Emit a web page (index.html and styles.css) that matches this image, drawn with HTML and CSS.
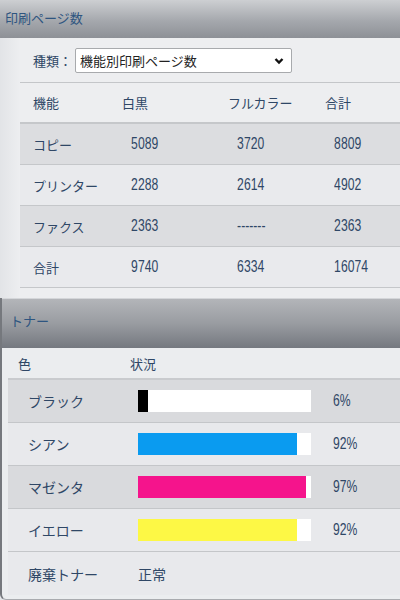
FILE: index.html
```html
<!DOCTYPE html>
<html lang="ja">
<head>
<meta charset="utf-8">
<link rel="stylesheet" href="styles.css">
</head>
<body>
  <!-- page counts -->
  <div class="panel pages">
    <div class="panel-head">印刷ページ数</div>
    <div class="pages-body">
      <div class="kind-row">
        <span class="kind-label">種類：</span>
        <span class="select-wrap">
          <select class="kind-select">
            <option>機能別印刷ページ数</option>
          </select>
          <svg class="chev" width="10" height="8" viewBox="0 0 10 8"><path d="M1.5 2 L5 5.5 L8.5 2" fill="none" stroke="#111" stroke-width="2.4"/></svg>
        </span>
      </div>
      <div class="count-table">
        <div class="crow chead">
          <div class="c c1">機能</div>
          <div class="c">白黒</div>
          <div class="c">フルカラー</div>
          <div class="c">合計</div>
        </div>
        <div class="crow shade">
          <div class="c c1">コピー</div>
          <div class="c num">5089</div>
          <div class="c num">3720</div>
          <div class="c num">8809</div>
        </div>
        <div class="crow">
          <div class="c c1">プリンター</div>
          <div class="c num">2288</div>
          <div class="c num">2614</div>
          <div class="c num">4902</div>
        </div>
        <div class="crow shade">
          <div class="c c1">ファクス</div>
          <div class="c num">2363</div>
          <div class="c num">-------</div>
          <div class="c num">2363</div>
        </div>
        <div class="crow">
          <div class="c c1">合計</div>
          <div class="c num">9740</div>
          <div class="c num">6334</div>
          <div class="c num">16074</div>
        </div>
      </div>
    </div>
  </div>

  <!-- toner -->
  <div class="panel toner">
    <div class="panel-head toner-head">トナー</div>
    <div class="toner-body">
      <div class="trow thead">
        <div class="t1">色</div>
        <div>状況</div>
      </div>
      <div class="trow shade">
        <div class="t1 tl">ブラック</div>
        <div class="bar"><div class="fill black" style="width:6%"></div></div>
        <div class="pct num">6%</div>
      </div>
      <div class="trow">
        <div class="t1 tl">シアン</div>
        <div class="bar"><div class="fill cyan" style="width:92%"></div></div>
        <div class="pct num">92%</div>
      </div>
      <div class="trow shade">
        <div class="t1 tl">マゼンタ</div>
        <div class="bar"><div class="fill magenta" style="width:97%"></div></div>
        <div class="pct num">97%</div>
      </div>
      <div class="trow">
        <div class="t1 tl">イエロー</div>
        <div class="bar"><div class="fill yellow" style="width:92%"></div></div>
        <div class="pct num">92%</div>
      </div>
      <div class="trow last">
        <div class="t1 tl">廃棄トナー</div>
        <div class="status">正常</div>
      </div>
    </div>
  </div>
</body>
</html>
```

FILE: styles.css
```css
*
{
   margin: 0;
   padding: 0;
   box-sizing: border-box;
}
body
{
   width: 400px;
   height: 600px;
   overflow: hidden;
   background-color: #e4e6e9;
   font-family: "Noto Sans CJK JP", "Noto Sans", sans-serif;
   font-size: 13px;
   color: #2f4766;
}
/* numbers are tall and narrow in the original */
.num
{
   font-family: "Liberation Sans", sans-serif;
   font-size: 16px;
   transform: scaleX(.76);
   transform-origin: left center;
}
.panel-head
{
   height: 38px;
   line-height: 36px;
   padding-left: 5px;
   font-size: 13px;
   color: #2e5580;
   background: linear-gradient(#cdcfd2, #a5a8ad 55%, #8d9096);
}

/* page counts */
.pages
{
   height: 298px;
   background-color: #eceef0;
}
.pages-body
{
   background: linear-gradient(90deg, #e2e4e7, #edeef0 20px);
   height: 260px;
}
.kind-row
{
   height: 45px;
   display: flex;
   align-items: center;
   border-bottom: 1px solid #c4c6c9;
   margin-left: 20px;
   padding-left: 13px;
}
.kind-label
{
   width: 42px;
}
.select-wrap
{
   position: relative;
   display: block;
}
.kind-select
{
   appearance: none;
   -webkit-appearance: none;
   width: 217px;
   height: 25px;
   border: 1px solid #a8aaad;
   border-radius: 2px;
   background-color: #fff;
   font-family: "Noto Sans CJK JP", sans-serif;
   font-size: 13px;
   color: #222;
   padding-left: 4px;
}
.chev
{
   position: absolute;
   right: 8px;
   top: 9px;
}
.count-table
{
   margin-left: 20px;
}
.crow
{
   display: grid;
   grid-template-columns: 102px 106px 97px 1fr;
   align-items: center;
   height: 41px;
   border-bottom: 1px solid #c5c7ca;
   background-color: #e9eaed;
}
.crow.chead
{
   background-color: transparent;
   border-bottom: 2px solid #c5c7ca;
}
.crow.shade
{
   background-color: #dcdde0;
}
.c1
{
   padding-left: 13px;
}
.c.num
{
   padding-left: 12px;
}

/* toner */
.toner
{
   height: 302px;
   border-left: 2px solid #75787d;
   border-bottom: 1px solid #a9abaf;
   border-bottom-left-radius: 6px;
   overflow: hidden;
   background-color: #ebedef;
}
.toner-head
{
   height: 50px;
   line-height: 44px;
   padding-left: 8px;
   background: linear-gradient(#b3b5b9, #999ca1 50%, #74787f);
   border-top: 1px solid #d4d6d9;
}
.toner-body
{
   margin-left: 6px;
}
.trow
{
   display: grid;
   grid-template-columns: 130px 173px 1fr;
   align-items: center;
   height: 43px;
   border-bottom: 1px solid #c4c6c9;
   background-color: #e8e9ec;
   font-size: 14px;
}
.trow.thead
{
   grid-template-columns: 122px 1fr;
   height: 32px;
   background-color: transparent;
   border-bottom: 2px solid #c9cbce;
   font-size: 13px;
}
.trow.thead .t1
{
   padding-left: 10px;
}
.trow.shade
{
   background-color: #d9dadd;
}
.trow.last
{
   border-bottom: none;
}
.tl
{
   padding-left: 20px;
}
.bar
{
   height: 22px;
   background-color: #fff;
}
.fill
{
   height: 100%;
}
.black { background-color: #000; }
.cyan { background-color: #0a9bf0; }
.magenta { background-color: #f5148c; }
.yellow { background-color: #fdf845; }
.pct
{
   padding-left: 29px;
}
.status
{
   font-size: 14px;
}
```
